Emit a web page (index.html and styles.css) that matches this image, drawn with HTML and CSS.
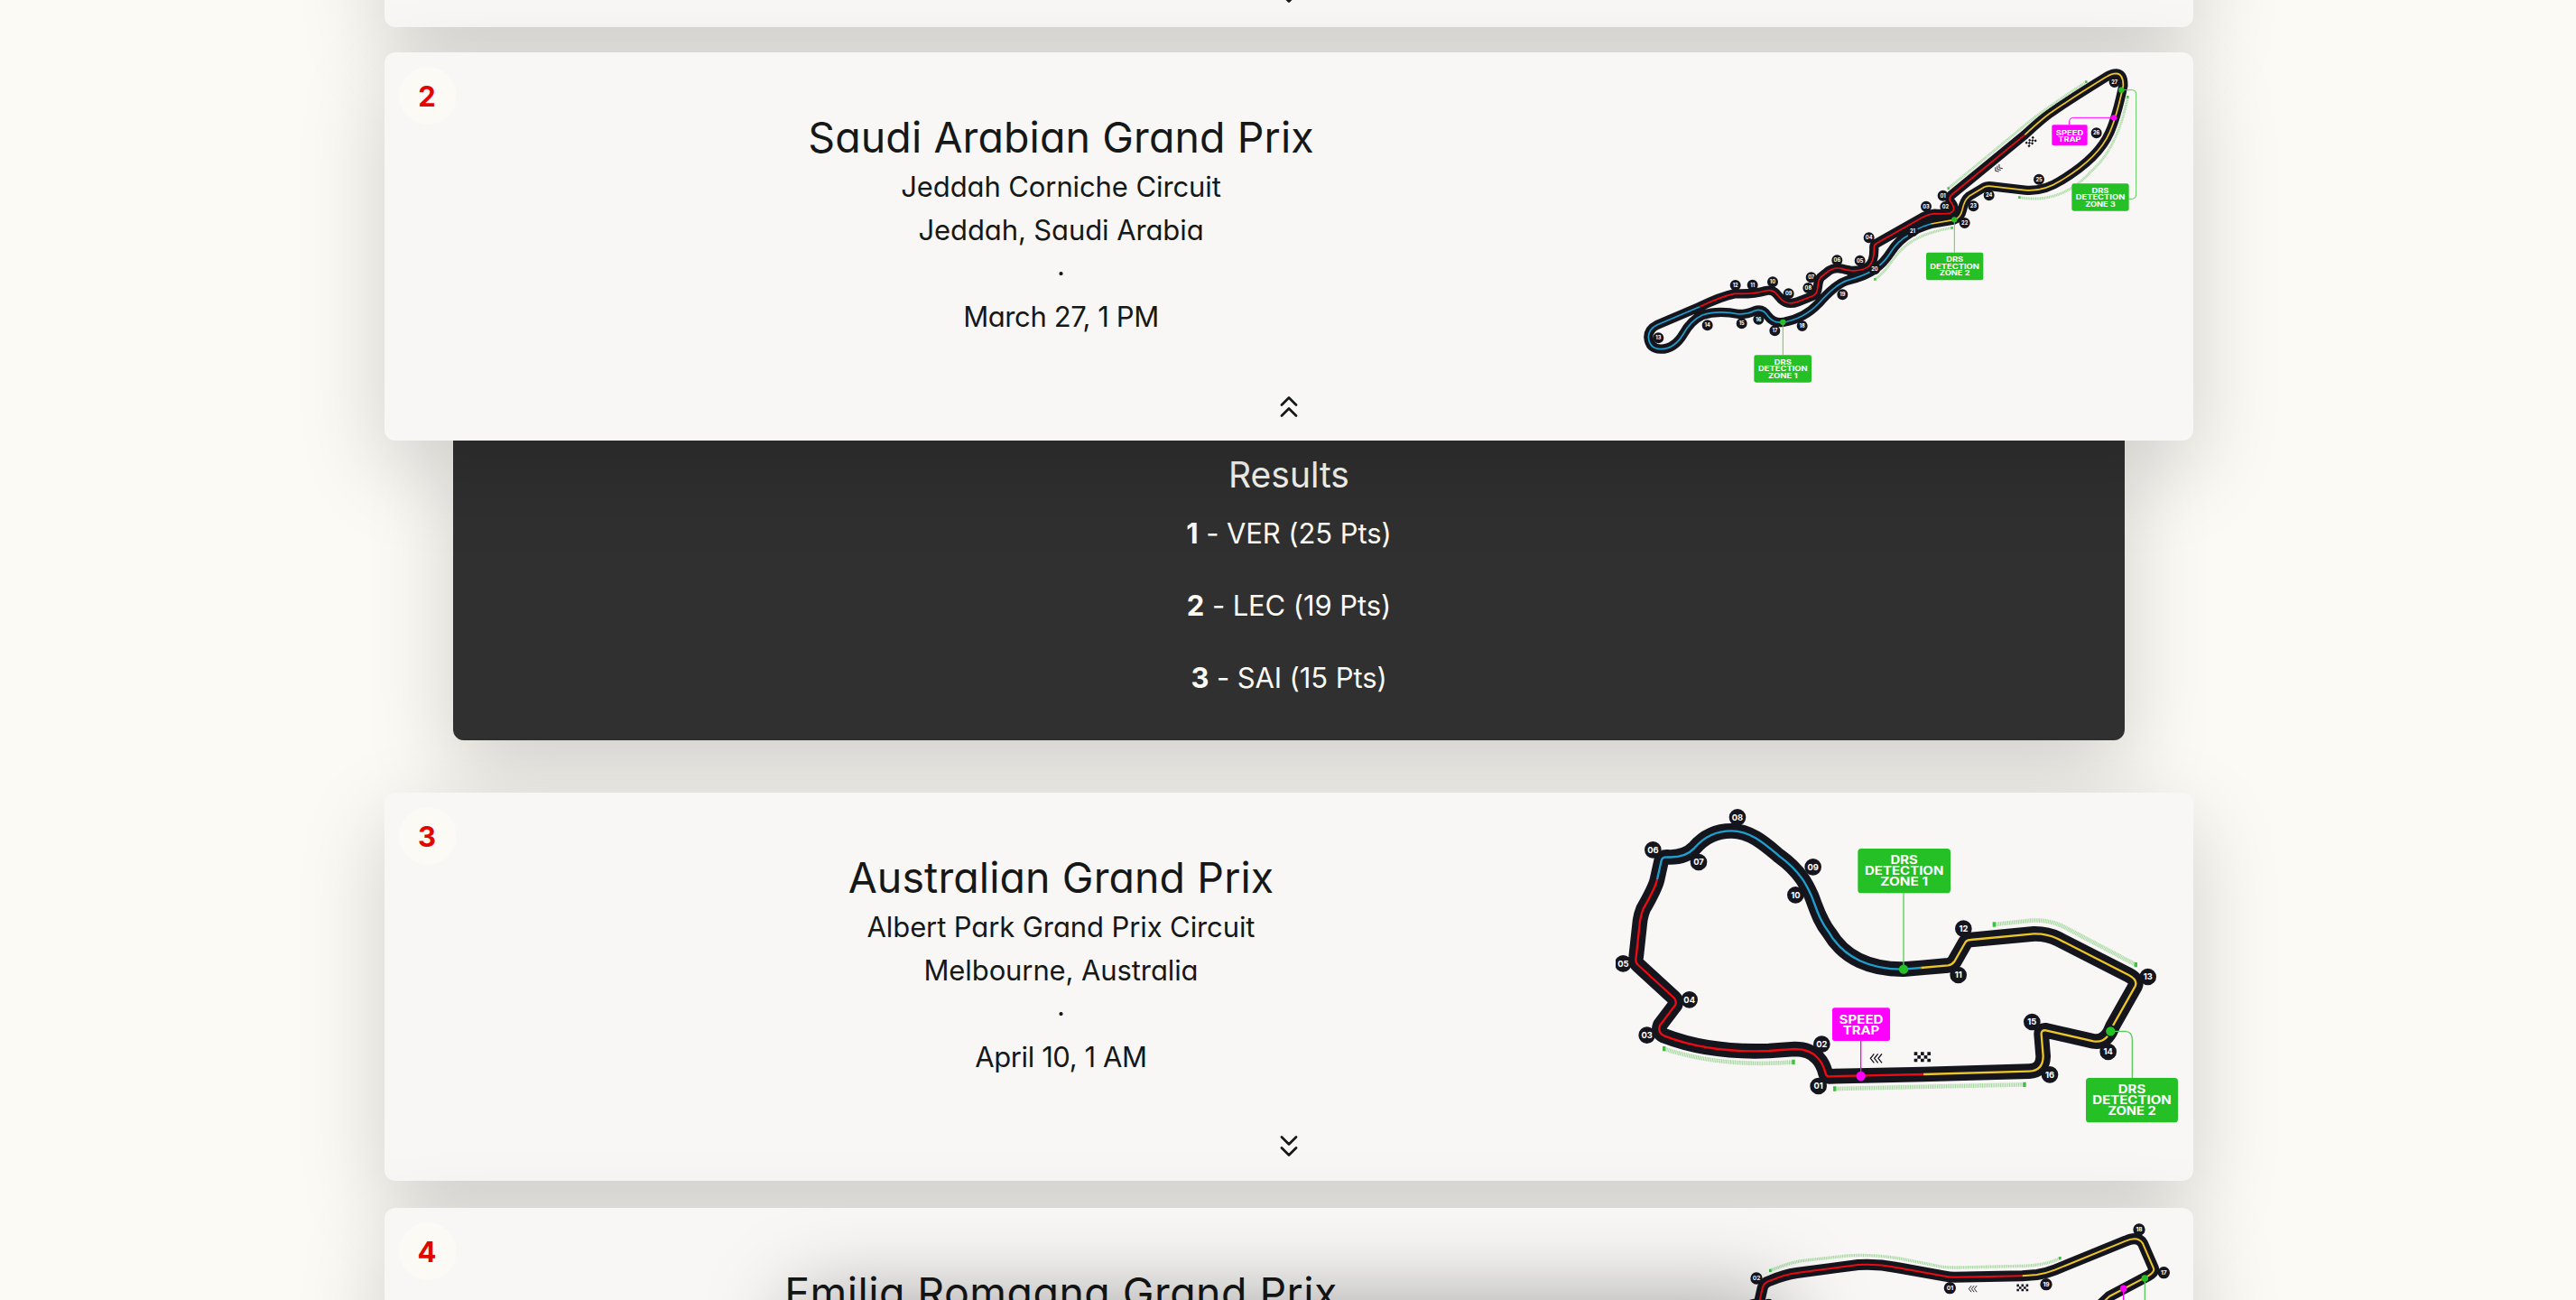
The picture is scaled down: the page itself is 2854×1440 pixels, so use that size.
FILE: index.html
```html
<!DOCTYPE html>
<html lang="en">
<head>
<meta charset="utf-8">
<title>Race Schedule</title>
<link rel="stylesheet" href="styles.css">
</head>
<body>
<svg class="defs" width="0" height="0" aria-hidden="true">
  <defs>
    <symbol id="chevrons-up" viewBox="0 0 24 24"><path class="chevron" d="M4 10.5l8-8 8 8M4 22.5l8-8 8 8"/></symbol>
    <symbol id="chevrons-down" viewBox="0 0 24 24"><path class="chevron" d="M4 1.5l8 8 8-8M4 13.5l8 8 8-8"/></symbol>
    <g id="flag"><path fill="#15151e" d="M-27-16h11v11h-11zM-5-16h11v11h-11zM17-16h11v11h-11zM-16-5h11v11h-11zM6-5h11v11h-11zM-27 6h11v11h-11zM-5 6h11v11h-11zM17 6h11v11h-11z"/></g>
    <g id="direction"><path fill="none" stroke="#15151e" stroke-width="4" d="M-8-15l-12 15 12 15M5-15l-12 15 12 15M18-15l-12 15 12 15"/></g>
  </defs>
</svg>

<main class="schedule">
  <section class="race">
    <article class="card card-scrolled">
      <div class="toggle"><svg class="icon"><use href="#chevrons-down"/></svg></div>
    </article>
  </section>

  <section class="race race-open">
    <article class="card">
      <span class="round">2</span>
      <div class="info">
        <h2 class="name">Saudi Arabian Grand Prix</h2>
        <p class="line">Jeddah Corniche Circuit</p>
        <p class="line">Jeddah, Saudi Arabia</p>
        <p class="line">·</p>
        <p class="line date">March 27, 1 PM</p>
      </div>
      <svg class="track track-small" viewBox="-30 -516 1920 1290">
        <path class="asphalt" d="M1330-242L1086-42Q1074-30 1086-16Q1104 8 1082 18Q1060 22 1030 20Q1010 22 990 32L835 120Q828 124 829 134Q830 180 810 196Q785 212 750 209Q735 207 722 203Q700 197 680 209L652 231Q644 240 642 262Q640 288 624 294L575 313Q543 325 522 306L504 286Q492 271 470 276Q430 288 365 286Q320 295 248 330L107 390Q79 404 79 430Q82 469 120 470Q165 470 195 420Q220 375 258 357Q310 340 380 354Q410 354 432 343Q458 333 476 360Q494 385 526 381Q595 370 645 318Q700 255 740 242Q800 228 831 205Q860 185 885 147Q910 108 950 84Q980 64 1018 54L1096 40Q1116 34 1122 8Q1128-24 1145-38L1195-68Q1205-73 1220-71L1330-58Q1390-52 1450-90Q1575-165 1612-250Q1635-302 1657-405Q1658-444 1634-446Q1618-446 1600-434Q1480-360 1420-318Q1390-298 1330-242Z"/>
        <path fill="#15151e" d="M940 60L1010 20 1095 5 1120 30 1020 55 900 120zM740 205L830 190 830 215 740 240z"/>
        <path class="sector s1" d="M1330-242L1086-42Q1074-30 1086-16Q1104 8 1082 18Q1060 22 1030 20Q1010 22 990 32L835 120Q828 124 829 134Q830 180 810 196Q785 212 750 209Q735 207 722 203Q700 197 680 209L652 231Q644 240 642 262Q640 288 624 294L575 313Q543 325 522 306L504 286Q492 271 470 276Q430 288 365 286Q320 295 248 330"/>
        <path class="sector s2" d="M248 330L107 390Q79 404 79 430Q82 469 120 470Q165 470 195 420Q220 375 258 357Q310 340 380 354Q410 354 432 343Q458 333 476 360Q494 385 526 381Q595 370 645 318Q700 255 740 242Q785 230 815 214M847 192Q868 175 885 147Q908 110 942 92M972 72Q990 62 1018 54"/>
        <path class="sector s3" d="M1018 54L1096 40Q1116 34 1122 8Q1128-24 1145-38L1195-68Q1205-73 1220-71L1330-58Q1390-52 1450-90Q1575-165 1612-250Q1635-302 1657-405Q1658-444 1634-446Q1618-446 1600-434Q1480-360 1420-318Q1390-298 1330-242"/>
        <path class="drs" d="M1076-64L1350-290Q1400-330 1534-418M1672-368Q1640-200 1550-120Q1450-10 1312-34M832 238C905 190 890 100 1088 67"/>
        <path class="drs-end" d="M1076-60v-8M1534-414v-8M1672-364v-8M1312-38v8M832 234v8M1088 63v8"/>
        <path class="leader" d="M526 381V490M1096 40V149M1650-391H1688Q1700-390 1700-380V-42Q1700-30 1688-29H1676"/>
        <path class="leader trap" d="M1478-275V-285Q1478-299 1492-299H1626"/>
        <path class="node" d="M526 381h0M1096 40h0M1651-391h0"/>
        <path class="node trap" d="M1626-299h0"/>
        <use href="#flag" transform="translate(1350 -219) rotate(-39) scale(.62)"/>
        <use href="#direction" transform="translate(1242 -130) rotate(-39) scale(.62)"/>
        <path class="turns" d="M368 258h0M425 257h0M492 247h0M545 286h0M610 267h0M620 232h0M706 175h0M782 176h0M812 100h0M112 433h0M275 391h0M389 385h0M445 371h0M499 409h0M590 393h0M724 289h0M831 205h0M957 79h0M1058-40h0M1066-3h0M1002-4h0M1130 51h0M1159-5h0M1211-41h0M1377-94h0M1568-248h0M1628-417h0"/>
        <g class="turn-labels">
          <text x="368" y="264">12</text><text x="425" y="263">11</text><text x="492" y="253">10</text><text x="545" y="292">09</text><text x="610" y="273">08</text><text x="620" y="238">07</text><text x="706" y="181">06</text><text x="782" y="182">05</text><text x="812" y="106">04</text><text x="112" y="439">13</text><text x="275" y="397">14</text><text x="389" y="391">15</text><text x="445" y="377">16</text><text x="499" y="415">17</text><text x="590" y="399">18</text><text x="724" y="295">19</text><text x="831" y="211">20</text><text x="957" y="85">21</text><text x="1058" y="-34">01</text><text x="1066" y="3">02</text><text x="1002" y="2">03</text><text x="1130" y="57">22</text><text x="1159" y="1">23</text><text x="1211" y="-35">24</text><text x="1377" y="-88">25</text><text x="1568" y="-242">26</text><text x="1628" y="-411">27</text>
        </g>
        <rect class="tag" x="430" y="490" width="191" height="91" rx="7"/>
        <rect class="tag" x="1002" y="149" width="190" height="92" rx="7"/>
        <rect class="tag" x="1486" y="-80" width="190" height="91" rx="7"/>
        <rect class="tag trap" x="1420" y="-275" width="118" height="68" rx="5"/>
        <g class="tag-labels">
          <text x="526" y="522" textLength="57" lengthAdjust="spacingAndGlyphs">DRS</text><text x="526" y="544" textLength="164" lengthAdjust="spacingAndGlyphs">DETECTION</text><text x="526" y="566" textLength="98" lengthAdjust="spacingAndGlyphs">ZONE 1</text>
          <text x="1097" y="181" textLength="57" lengthAdjust="spacingAndGlyphs">DRS</text><text x="1097" y="203" textLength="164" lengthAdjust="spacingAndGlyphs">DETECTION</text><text x="1097" y="225" textLength="101" lengthAdjust="spacingAndGlyphs">ZONE 2</text>
          <text x="1581" y="-48" textLength="57" lengthAdjust="spacingAndGlyphs">DRS</text><text x="1581" y="-26" textLength="164" lengthAdjust="spacingAndGlyphs">DETECTION</text><text x="1581" y="-4" textLength="101" lengthAdjust="spacingAndGlyphs">ZONE 3</text>
          <text x="1479" y="-241" textLength="91" lengthAdjust="spacingAndGlyphs">SPEED</text><text x="1479" y="-219" textLength="76" lengthAdjust="spacingAndGlyphs">TRAP</text>
        </g>
      </svg>
      <div class="toggle"><svg class="icon"><use href="#chevrons-up"/></svg></div>
    </article>
    <div class="results">
      <h3 class="results-title">Results</h3>
      <p class="result"><b>1</b> - VER (25 Pts)</p>
      <p class="result"><b>2</b> - LEC (19 Pts)</p>
      <p class="result"><b>3</b> - SAI (15 Pts)</p>
    </div>
  </section>

  <section class="race">
    <article class="card">
      <span class="round">3</span>
      <div class="info">
        <h2 class="name">Australian Grand Prix</h2>
        <p class="line">Albert Park Grand Prix Circuit</p>
        <p class="line">Melbourne, Australia</p>
        <p class="line">·</p>
        <p class="line date">April 10, 1 AM</p>
      </div>
      <svg class="track track-large" viewBox="90 -6 1920 1290">
        <path class="asphalt" d="M1113 930L799 937Q790 937 788 928Q780 895 762 876Q736 846 686 846Q640 849 600 852Q400 860 251 802Q228 790 238 766L288 700Q294 686 283 675L165 567Q154 558 158 540L170 430Q172 405 182 380Q222 310 228 283L242 220Q244 208 260 208Q320 212 352 178C380 145 420 121 475 121C540 121 590 168 634 205Q682 240 710 280Q724 300 740 335C758 380 768 420 800 460C850 545 940 582 1047 581L1105 576L1195 568Q1208 566 1216 555L1252 492Q1257 483 1270 483L1480 463Q1525 462 1560 480L1795 600Q1826 616 1817 637L1743 768L1733 790Q1712 826 1678 820L1520 784Q1504 782 1505 797L1511 870Q1510 918 1465 920Z"/>
        <path class="sector s1" d="M1113 930L799 937Q790 937 788 928Q780 895 762 876Q736 846 686 846Q640 849 600 852Q400 860 251 802Q228 790 238 766L288 700Q294 686 283 675L165 567Q154 558 158 540L170 430Q172 405 182 380Q222 310 228 283"/>
        <path class="sector s2" d="M228 283L242 220Q244 208 260 208Q320 212 352 178C380 145 420 121 475 121C540 121 590 168 634 205Q682 240 710 280Q724 300 740 335C758 380 768 420 800 460C850 545 940 582 1047 581L1105 576"/>
        <path class="sector s3" d="M1105 576L1195 568Q1208 566 1216 555L1252 492Q1257 483 1270 483L1480 463Q1525 462 1560 480L1795 600Q1826 616 1817 637L1743 768M1725 803Q1708 825 1678 820L1520 784Q1504 782 1505 797L1511 870Q1510 918 1465 920L1113 930"/>
        <path class="drs" d="M251 845Q440 908 681 889M818 978L1449 964M1348 432L1470 419Q1530 415 1580 440L1819 566"/>
        <path class="drs-end" d="M251 837v16M681 881v16M818 970v16M1449 956v16M1348 424v16M1819 558v16"/>
        <path class="leader" d="M1047 328V581M1735 787H1785Q1807 789 1807 815V942"/>
        <path class="leader trap" d="M905 819V936"/>
        <path class="node" d="M1047 581h0M1735 787h0"/>
        <path class="node trap" d="M905 936h0"/>
        <use href="#flag" transform="translate(1109 872)"/>
        <use href="#direction" transform="translate(957 877)"/>
        <path class="turns" d="M495 76h0M214 184h0M366 225h0M746 241h0M688 334h0M1246 446h0M1229 600h0M1859 606h0M1727 855h0M1474 756h0M1533 931h0M115 562h0M335 682h0M194 800h0M775 830h0M764 969h0"/>
        <g class="turn-labels">
          <text x="495" y="86">08</text><text x="214" y="194">06</text><text x="366" y="235">07</text><text x="746" y="251">09</text><text x="688" y="344">10</text><text x="1246" y="456">12</text><text x="1229" y="610">11</text><text x="1859" y="616">13</text><text x="1727" y="865">14</text><text x="1474" y="766">15</text><text x="1533" y="941">16</text><text x="115" y="572">05</text><text x="335" y="692">04</text><text x="194" y="810">03</text><text x="775" y="840">02</text><text x="764" y="979">01</text>
        </g>
        <rect class="tag" x="895" y="180" width="308" height="148" rx="11"/>
        <rect class="tag" x="1653" y="942" width="306" height="148" rx="11"/>
        <rect class="tag trap" x="810" y="709" width="192" height="110" rx="8"/>
        <g class="tag-labels">
          <text x="1049" y="232" textLength="91" lengthAdjust="spacingAndGlyphs">DRS</text><text x="1049" y="267" textLength="262" lengthAdjust="spacingAndGlyphs">DETECTION</text><text x="1049" y="303" textLength="158" lengthAdjust="spacingAndGlyphs">ZONE 1</text>
          <text x="1806" y="994" textLength="91" lengthAdjust="spacingAndGlyphs">DRS</text><text x="1806" y="1029" textLength="262" lengthAdjust="spacingAndGlyphs">DETECTION</text><text x="1806" y="1065" textLength="161" lengthAdjust="spacingAndGlyphs">ZONE 2</text>
          <text x="906" y="763" textLength="147" lengthAdjust="spacingAndGlyphs">SPEED</text><text x="906" y="798" textLength="122" lengthAdjust="spacingAndGlyphs">TRAP</text>
        </g>
      </svg>
      <div class="toggle"><svg class="icon"><use href="#chevrons-down"/></svg></div>
    </article>
  </section>

  <section class="race">
    <article class="card">
      <span class="round">4</span>
      <div class="info">
        <h2 class="name name-wide">Emilia Romagna Grand Prix</h2>
      </div>
      <svg class="track track-medium" viewBox="-270 24 1920 1290">
        <path class="asphalt" d="M160 350Q205 345 208 335L218 290Q222 272 246 265Q290 246 332 240L536 213Q600 209 664 222L825 251Q840 254 857 254L1082 250L1130 246Q1160 242 1190 230L1425 134Q1466 116 1482 142L1518 225Q1522 238 1500 250L1371 318L1335 352"/>
        <path class="sector s1" d="M206 345L218 290Q222 272 246 265Q290 246 332 240L536 213Q600 209 664 222L825 251Q840 254 857 254L1082 250"/>
        <path class="sector s3" d="M1082 250L1130 246Q1160 242 1190 230L1425 134Q1466 116 1482 142L1518 225Q1522 238 1500 250L1371 318L1335 352"/>
        <path class="drs" d="M244 232Q310 205 354 199L500 183Q580 177 680 193L800 217Q830 223 870 222L1080 217Q1160 215 1207 191"/>
        <path class="drs-end" d="M244 227v10M1207 186v10"/>
        <path class="leader" d="M1489 258V400"/>
        <path class="leader trap" d="M1418 292V400"/>
        <path class="node" d="M1489 258h0"/>
        <path class="node trap" d="M1418 292h0"/>
        <use href="#flag" transform="translate(1082 289) scale(.7)"/>
        <use href="#direction" transform="translate(918 293) scale(.7)"/>
        <path class="turns" d="M198 258h0M841 290h0M1161 278h0M1470 96h0M1552 239h0M238 346h0"/>
        <g class="turn-labels">
          <text x="198" y="265">02</text><text x="841" y="297">01</text><text x="1161" y="285">19</text><text x="1470" y="103">18</text><text x="1552" y="246">17</text>
        </g>
      </svg>
      <div class="toggle"><svg class="icon"><use href="#chevrons-down"/></svg></div>
    </article>
  </section>
</main>
<div class="dock"></div>
</body>
</html>
```

FILE: styles.css
```css
* { box-sizing: border-box; }

html, body { height: 100%; }

body {
  margin: 0;
  padding-left: 2px;
  overflow: hidden;
  background: #fbfaf5;
  color: #161717;
  font-family: Inter, "Liberation Sans", sans-serif;
  font-feature-settings: "cv11";
  font-size: 31px;
}

h2, h3, p { margin: 0; }

.defs { display: block; }

.schedule {
  display: flex;
  flex-direction: column;
  width: 2004px;
  height: 1440px;
  margin: 0 auto;
}

.race { flex: none; margin-bottom: 28px; }
.race + .race + .race { margin-bottom: 30px; }
.race.race-open { margin-bottom: 58px; }

.card {
  position: relative;
  z-index: 1;
  display: grid;
  grid-template-columns: 119px 1fr 640px;
  grid-template-rows: 360px 70px;
  padding-left: 16px;
  height: 430px;
  border-radius: 12px;
  background: #f8f7f5;
  box-shadow: 0 32px 96px rgba(0, 0, 0, .175);
}

.card.card-scrolled { margin-top: -400px; }

.round {
  display: flex;
  align-items: center;
  justify-content: center;
  width: 64px;
  height: 64px;
  margin-top: 16px;
  padding-right: 2px;
  border-radius: 50%;
  background: #fbfaf5;
  color: #e10600;
  font-weight: 700;
}

.info { padding-top: 65px; text-align: center; }

.name {
  margin-bottom: 1px;
  font-size: 46.5px;
  font-weight: 430;
  line-height: 59px;
  letter-spacing: .1px;
  white-space: nowrap;
}

.name-wide { letter-spacing: .45px; }

.line { line-height: 48px; font-weight: 430; letter-spacing: -.1px; }
.line.date { letter-spacing: -.4px; }

.track {
  grid-column: 3;
  grid-row: 1 / 3;
  width: 640px;
  height: 430px;
}

.toggle {
  grid-column: 1 / 4;
  grid-row: 2;
  display: flex;
  justify-content: center;
  margin-left: -16px;
  padding-top: 20px;
}

.icon { width: 24px; height: 24px; }

.chevron {
  fill: none;
  stroke: #161717;
  stroke-width: 2.7;
  stroke-linecap: round;
  stroke-linejoin: round;
}

.results {
  width: 1852px;
  height: 332px;
  margin: 0 auto;
  padding-top: 14px;
  border-radius: 0 0 12px 12px;
  background: #303030;
  color: #fbfaf5;
  text-align: center;
  box-shadow: 0 32px 96px rgba(0, 0, 0, .175);
}

.results-title { margin-bottom: 12px; font-size: 39px; font-weight: 430; line-height: 48px; }
.result { height: 80px; padding-top: 5px; line-height: 48px; font-weight: 430; letter-spacing: -.1px; }

.asphalt, .sector, .drs, .drs-end, .leader, .node, .turns { fill: none; stroke-linejoin: round; }
.asphalt { stroke: #15151e; }
.s1 { stroke: #ee0a10; }
.s2 { stroke: #1f9fce; }
.s3 { stroke: #ecc527; }
.drs { stroke: #a5d89f; stroke-dasharray: 3 2; }
.drs-end { stroke: #3fc142; }
.leader { stroke: #5ccc5c; }
.node { stroke: #24c026; stroke-linecap: round; }
.leader.trap, .node.trap { stroke: #ff00ff; }
.turns { stroke: #15151e; stroke-linecap: round; }
.tag { fill: #24c026; }
.tag.trap { fill: #ff00ff; }
.turn-labels, .tag-labels { fill: #fff; font-weight: 700; text-anchor: middle; }

.track-small .asphalt { stroke-width: 31; }
.track-small .sector { stroke-width: 5; }
.track-small .drs { stroke-width: 9; }
.track-small .drs-end { stroke-width: 7; }
.track-small .leader { stroke-width: 3; }
.track-small .node { stroke-width: 19; }
.track-small .turns { stroke-width: 36; }
.track-small .turn-labels { font-size: 17px; }
.track-small .tag-labels { font-size: 24px; }

.track-large .asphalt { stroke-width: 50; }
.track-large .sector { stroke-width: 7; }
.track-large .drs { stroke-width: 14; }
.track-large .drs-end { stroke-width: 10; }
.track-large .leader { stroke-width: 4; }
.track-large .node { stroke-width: 31; }
.track-large .turns { stroke-width: 56; }
.track-large .turn-labels { font-size: 28px; }
.track-large .tag-labels { font-size: 38px; }

.track-medium .asphalt { stroke-width: 36; }
.track-medium .sector { stroke-width: 6; }
.track-medium .drs { stroke-width: 10; }
.track-medium .drs-end { stroke-width: 8; }
.track-medium .leader { stroke-width: 4; }
.track-medium .node { stroke-width: 23; }
.track-medium .turns { stroke-width: 40; }
.track-medium .turn-labels { font-size: 20px; }

.dock {
  position: fixed;
  z-index: 2;
  top: 100%;
  left: 880px;
  width: 1096px;
  height: 120px;
  box-shadow: 0 0 96px rgba(0, 0, 0, .35);
}
```
